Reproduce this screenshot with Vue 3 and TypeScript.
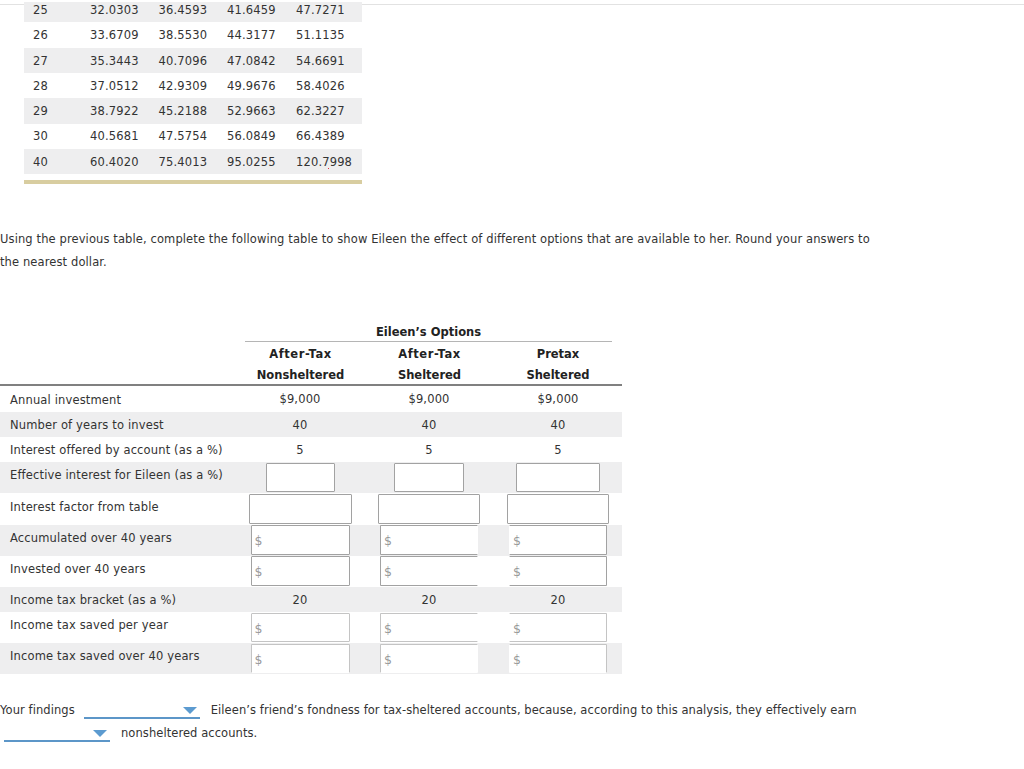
<script setup lang="ts">
type Box = { w: number; money?: boolean; h?: number; dark?: boolean; noRight?: boolean; noLeft?: boolean; noBottom?: boolean }
type Row = { label: string; h: number; shade: boolean; cells: (string | Box)[]; top?: boolean; low?: boolean }

const top = [
  ['25', '32.0303', '36.4593', '41.6459', '47.7271'],
  ['26', '33.6709', '38.5530', '44.3177', '51.1135'],
  ['27', '35.3443', '40.7096', '47.0842', '54.6691'],
  ['28', '37.0512', '42.9309', '49.9676', '58.4026'],
  ['29', '38.7922', '45.2188', '52.9663', '62.3227'],
  ['30', '40.5681', '47.5754', '56.0849', '66.4389'],
  ['40', '60.4020', '75.4013', '95.0255', '120.7998']
]

const money = (dark: boolean, noBottom = false): Box[] => [
  { w: 99, money: true, dark, h: dark ? 30 : 29, noBottom },
  { w: 98, money: true, dark, h: dark ? 30 : 29, noRight: true, noBottom },
  { w: 98, money: true, dark, h: dark ? 30 : 29, noLeft: true, noBottom }
]

const rows: Row[] = [
  { label: 'Annual investment', h: 26, shade: false, cells: ['$9,000', '$9,000', '$9,000'] },
  { label: 'Number of years to invest', h: 25, shade: true, cells: ['40', '40', '40'] },
  { label: 'Interest offered by account (as a %)', h: 25, shade: false, cells: ['5', '5', '5'] },
  { label: 'Effective interest for Eileen (as a %)', h: 31, shade: true, top: true, cells: [{ w: 69, dark: true, h: 29 }, { w: 70, dark: true, h: 29 }, { w: 84, dark: true, h: 29 }] },
  { label: 'Interest factor from table', h: 32, shade: false, top: true, low: true, cells: [{ w: 103, dark: true, h: 30 }, { w: 102, dark: true, h: 30 }, { w: 102, dark: true, h: 30 }] },
  { label: 'Accumulated over 40 years', h: 31, shade: true, top: true, cells: money(true) },
  { label: 'Invested over 40 years', h: 31, shade: false, top: true, cells: money(true) },
  { label: 'Income tax bracket (as a %)', h: 25, shade: true, cells: ['20', '20', '20'] },
  { label: 'Income tax saved per year', h: 31, shade: false, top: true, cells: money(false) },
  { label: 'Income tax saved over 40 years', h: 31, shade: true, top: true, cells: money(false, true) }
]

const isBox = (c: string | Box): c is Box => typeof c !== 'string'
const asBox = (c: string | Box) => c as Box
</script>

<template>
  <div class="page">
    <div class="topline"></div>

    <div class="factors">
      <div v-for="(r, i) in top" :key="r[0]" class="frow" :class="{ shade: i % 2 === 0 }">
        <span v-for="c in r" :key="c">{{ c }}</span>
      </div>
      <div class="goldbar"></div>
      <i class="speck"></i>
    </div>

    <p class="intro">Using the previous table, complete the following table to show Eileen the effect of different options that are available to her. Round your answers to the nearest dollar.</p>

    <div class="options">
      <div class="group">Eileen’s Options</div>
      <div class="heads">
        <div></div>
        <div><span class="wide">After-Tax</span><br />Nonsheltered</div>
        <div><span class="wide">After-Tax</span><br />Sheltered</div>
        <div>Pretax<br />Sheltered</div>
      </div>
      <div
        v-for="r in rows"
        :key="r.label"
        class="orow"
        :class="{ shade: r.shade, high: r.top, low: r.low }"
        :style="{ height: r.h + 'px' }"
      >
        <div class="label">{{ r.label }}</div>
        <div v-for="(c, i) in r.cells" :key="i" class="cell">
          <template v-if="isBox(c)">
            <div
              class="box"
              :class="{
                dark: asBox(c).dark,
                open: asBox(c).noRight,
                openleft: asBox(c).noLeft,
                openbottom: asBox(c).noBottom,
                money: asBox(c).money
              }"
              :style="{ width: asBox(c).w + 'px', height: asBox(c).h + 'px' }"
            >
              <span v-if="asBox(c).money">$</span>
            </div>
          </template>
          <template v-else>{{ c }}</template>
        </div>
      </div>
    </div>

    <div class="findings">
      <div class="line">
        <span>Your findings</span>
        <span class="select first"><i></i></span>
        <span>Eileen’s friend’s fondness for tax-sheltered accounts, because, according to this analysis, they effectively earn</span>
      </div>
      <div class="line second">
        <span class="select short"><i></i></span>
        <span>nonsheltered accounts.</span>
      </div>
    </div>
  </div>
</template>

<style>
html,
body {
  margin: 0;
  background: #fff;
}
</style>

<style scoped>
.page {
  width: 1024px;
  height: 769px;
  overflow: hidden;
  font-family: "DejaVu Sans", Verdana, sans-serif;
  font-size: 11.5px;
  letter-spacing: 0.15px;
  color: #333;
  padding-top: 4px;
  box-sizing: border-box;
}
.topline {
  height: 1px;
  background: #e2e2e2;
}
.factors {
  position: relative;
  width: 338px;
  margin-left: 24px;
  margin-top: -3px;
}
.frow {
  display: grid;
  grid-template-columns: 66px 68.5px 68.5px 69px 66px;
  height: 25.3px;
  padding-top: 0.4px;
  box-sizing: border-box;
  align-items: center;
}
.frow:first-child {
  height: 20.4px;
  padding-top: 0;
  align-items: end;
}
.frow:first-child span {
  padding-bottom: 5px;
}
.frow span:first-child {
  padding-left: 9px;
}
.shade {
  background: #eeeeef;
}
.goldbar {
  height: 4px;
  margin-top: 6px;
  background: #d8cda0;
}
.speck {
  position: absolute;
  left: 304px;
  top: 166px;
  width: 1px;
  height: 1px;
  background: #e0304a;
}
.intro {
  width: 880px;
  margin: 44px 0 0;
  line-height: 23px;
  letter-spacing: 0.11px;
}
.options {
  width: 622px;
  margin-top: 47px;
}
.group {
  margin-left: 245px;
  width: 367px;
  height: 21px;
  line-height: 22px;
  text-align: center;
  font-weight: bold;
  letter-spacing: 0;
  color: #222;
  border-bottom: 1px solid #b5b5b5;
  box-sizing: border-box;
}
.heads {
  display: grid;
  grid-template-columns: 236px 129px 129px 128px;
  height: 44px;
  line-height: 21px;
  padding-top: 2px;
  box-sizing: border-box;
  text-align: center;
  font-weight: bold;
  letter-spacing: 0;
  color: #222;
  border-bottom: 2px solid #808080;
}
.wide {
  letter-spacing: 0.55px;
}
.orow {
  display: grid;
  grid-template-columns: 236px 129px 129px 128px;
  align-items: center;
}
.label {
  padding-left: 10px;
  white-space: nowrap;
  padding-top: 1px;
}
.high .label {
  align-self: start;
  padding-top: 6px;
}
.low .label {
  padding-top: 7px;
}
.cell {
  display: flex;
  justify-content: center;
  align-items: center;
  height: 100%;
  padding-right: 1px;
  box-sizing: border-box;
  min-width: 0;
}
.cell:last-child {
  padding-right: 0;
}
.box {
  flex: none;
  background: #fff;
  box-sizing: border-box;
  border: 1px solid #c4c4c4;
  border-radius: 1px;
  display: flex;
  align-items: center;
}
.box.dark {
  border-color: #a2a2a2;
}
.box.open {
  border-right-color: transparent;
}
.box.openleft {
  border-left-color: transparent;
}
.box.openbottom {
  border-bottom-color: transparent;
}
.box.money {
  color: #999;
  font-size: 12.5px;
  padding: 1px 0 0 3px;
}
.box.money.dark {
  margin-bottom: 1px;
}
.findings {
  margin-top: 24px;
  letter-spacing: 0.07px;
}
.line {
  display: flex;
  align-items: center;
  height: 23px;
}
.select {
  position: relative;
  display: block;
  height: 15px;
  box-sizing: border-box;
  border-bottom: 2px solid #5c96c8;
  margin-top: 3px;
}
.select i {
  position: absolute;
  right: 3px;
  top: 3px;
  width: 0;
  height: 0;
  border-left: 7px solid transparent;
  border-right: 7px solid transparent;
  border-top: 7px solid #5c9bd0;
}
.first {
  width: 116px;
  margin-left: 9px;
  margin-right: 11px;
}
.short {
  width: 106px;
  margin-left: 4px;
  margin-right: 11px;
}
</style>
